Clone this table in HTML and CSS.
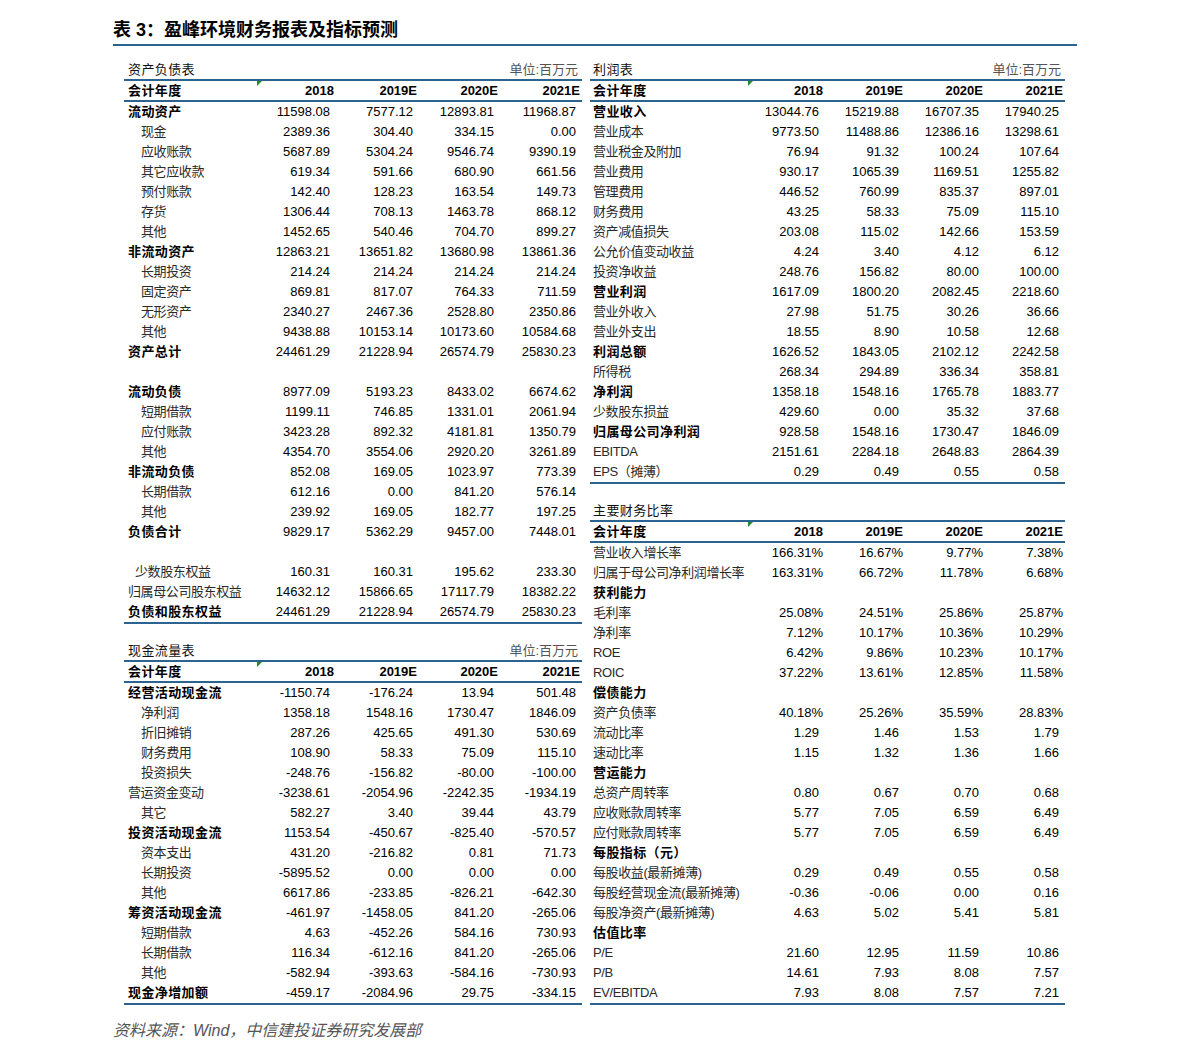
FILE: index.html
```html
<!DOCTYPE html>
<html lang="zh-CN">
<head>
<meta charset="utf-8">
<title>盈峰环境财务报表及指标预测</title>
<link rel="stylesheet" href="styles.css">
</head>
<body>
<div class="page">
  <div class="title">表 3：盈峰环境财务报表及指标预测</div>
  <div class="cols">
    <div class="col col-left">
      <table class="tbl tbl-left">
        <colgroup><col class="c-lab"><col class="c1"><col class="c2"><col class="c3"><col class="c4"></colgroup>
        <tr class="sec"><td class="lab">资产负债表</td><td colspan="4" class="unit">单位:百万元</td></tr>
        <tr class="hdr"><td class="lab b"><span class="mark"></span>会计年度</td><td>2018</td><td>2019E</td><td>2020E</td><td>2021E</td></tr>
        <tr><td class="lab b">流动资产</td><td class="n">11598.08</td><td class="n">7577.12</td><td class="n">12893.81</td><td class="n">11968.87</td></tr>
        <tr><td class="lab i1">现金</td><td class="n">2389.36</td><td class="n">304.40</td><td class="n">334.15</td><td class="n">0.00</td></tr>
        <tr><td class="lab i1">应收账款</td><td class="n">5687.89</td><td class="n">5304.24</td><td class="n">9546.74</td><td class="n">9390.19</td></tr>
        <tr><td class="lab i1">其它应收款</td><td class="n">619.34</td><td class="n">591.66</td><td class="n">680.90</td><td class="n">661.56</td></tr>
        <tr><td class="lab i1">预付账款</td><td class="n">142.40</td><td class="n">128.23</td><td class="n">163.54</td><td class="n">149.73</td></tr>
        <tr><td class="lab i1">存货</td><td class="n">1306.44</td><td class="n">708.13</td><td class="n">1463.78</td><td class="n">868.12</td></tr>
        <tr><td class="lab i1">其他</td><td class="n">1452.65</td><td class="n">540.46</td><td class="n">704.70</td><td class="n">899.27</td></tr>
        <tr><td class="lab b">非流动资产</td><td class="n">12863.21</td><td class="n">13651.82</td><td class="n">13680.98</td><td class="n">13861.36</td></tr>
        <tr><td class="lab i1">长期投资</td><td class="n">214.24</td><td class="n">214.24</td><td class="n">214.24</td><td class="n">214.24</td></tr>
        <tr><td class="lab i1">固定资产</td><td class="n">869.81</td><td class="n">817.07</td><td class="n">764.33</td><td class="n">711.59</td></tr>
        <tr><td class="lab i1">无形资产</td><td class="n">2340.27</td><td class="n">2467.36</td><td class="n">2528.80</td><td class="n">2350.86</td></tr>
        <tr><td class="lab i1">其他</td><td class="n">9438.88</td><td class="n">10153.14</td><td class="n">10173.60</td><td class="n">10584.68</td></tr>
        <tr><td class="lab b">资产总计</td><td class="n">24461.29</td><td class="n">21228.94</td><td class="n">26574.79</td><td class="n">25830.23</td></tr>
        <tr><td class="lab"></td><td></td><td></td><td></td><td></td></tr>
        <tr><td class="lab b">流动负债</td><td class="n">8977.09</td><td class="n">5193.23</td><td class="n">8433.02</td><td class="n">6674.62</td></tr>
        <tr><td class="lab i1">短期借款</td><td class="n">1199.11</td><td class="n">746.85</td><td class="n">1331.01</td><td class="n">2061.94</td></tr>
        <tr><td class="lab i1">应付账款</td><td class="n">3423.28</td><td class="n">892.32</td><td class="n">4181.81</td><td class="n">1350.79</td></tr>
        <tr><td class="lab i1">其他</td><td class="n">4354.70</td><td class="n">3554.06</td><td class="n">2920.20</td><td class="n">3261.89</td></tr>
        <tr><td class="lab b">非流动负债</td><td class="n">852.08</td><td class="n">169.05</td><td class="n">1023.97</td><td class="n">773.39</td></tr>
        <tr><td class="lab i1">长期借款</td><td class="n">612.16</td><td class="n">0.00</td><td class="n">841.20</td><td class="n">576.14</td></tr>
        <tr><td class="lab i1">其他</td><td class="n">239.92</td><td class="n">169.05</td><td class="n">182.77</td><td class="n">197.25</td></tr>
        <tr><td class="lab b">负债合计</td><td class="n">9829.17</td><td class="n">5362.29</td><td class="n">9457.00</td><td class="n">7448.01</td></tr>
        <tr><td class="lab"></td><td></td><td></td><td></td><td></td></tr>
        <tr><td class="lab i2">少数股东权益</td><td class="n">160.31</td><td class="n">160.31</td><td class="n">195.62</td><td class="n">233.30</td></tr>
        <tr><td class="lab">归属母公司股东权益</td><td class="n">14632.12</td><td class="n">15866.65</td><td class="n">17117.79</td><td class="n">18382.22</td></tr>
        <tr class="last"><td class="lab b">负债和股东权益</td><td class="n">24461.29</td><td class="n">21228.94</td><td class="n">26574.79</td><td class="n">25830.23</td></tr>
      </table>
      <div class="spacer"></div>
      <table class="tbl tbl-left">
        <colgroup><col class="c-lab"><col class="c1"><col class="c2"><col class="c3"><col class="c4"></colgroup>
        <tr class="sec"><td class="lab">现金流量表</td><td colspan="4" class="unit">单位:百万元</td></tr>
        <tr class="hdr"><td class="lab b"><span class="mark"></span>会计年度</td><td>2018</td><td>2019E</td><td>2020E</td><td>2021E</td></tr>
        <tr><td class="lab b">经营活动现金流</td><td class="n">-1150.74</td><td class="n">-176.24</td><td class="n">13.94</td><td class="n">501.48</td></tr>
        <tr><td class="lab i1">净利润</td><td class="n">1358.18</td><td class="n">1548.16</td><td class="n">1730.47</td><td class="n">1846.09</td></tr>
        <tr><td class="lab i1">折旧摊销</td><td class="n">287.26</td><td class="n">425.65</td><td class="n">491.30</td><td class="n">530.69</td></tr>
        <tr><td class="lab i1">财务费用</td><td class="n">108.90</td><td class="n">58.33</td><td class="n">75.09</td><td class="n">115.10</td></tr>
        <tr><td class="lab i1">投资损失</td><td class="n">-248.76</td><td class="n">-156.82</td><td class="n">-80.00</td><td class="n">-100.00</td></tr>
        <tr><td class="lab">营运资金变动</td><td class="n">-3238.61</td><td class="n">-2054.96</td><td class="n">-2242.35</td><td class="n">-1934.19</td></tr>
        <tr><td class="lab i1">其它</td><td class="n">582.27</td><td class="n">3.40</td><td class="n">39.44</td><td class="n">43.79</td></tr>
        <tr><td class="lab b">投资活动现金流</td><td class="n">1153.54</td><td class="n">-450.67</td><td class="n">-825.40</td><td class="n">-570.57</td></tr>
        <tr><td class="lab i1">资本支出</td><td class="n">431.20</td><td class="n">-216.82</td><td class="n">0.81</td><td class="n">71.73</td></tr>
        <tr><td class="lab i1">长期投资</td><td class="n">-5895.52</td><td class="n">0.00</td><td class="n">0.00</td><td class="n">0.00</td></tr>
        <tr><td class="lab i1">其他</td><td class="n">6617.86</td><td class="n">-233.85</td><td class="n">-826.21</td><td class="n">-642.30</td></tr>
        <tr><td class="lab b">筹资活动现金流</td><td class="n">-461.97</td><td class="n">-1458.05</td><td class="n">841.20</td><td class="n">-265.06</td></tr>
        <tr><td class="lab i1">短期借款</td><td class="n">4.63</td><td class="n">-452.26</td><td class="n">584.16</td><td class="n">730.93</td></tr>
        <tr><td class="lab i1">长期借款</td><td class="n">116.34</td><td class="n">-612.16</td><td class="n">841.20</td><td class="n">-265.06</td></tr>
        <tr><td class="lab i1">其他</td><td class="n">-582.94</td><td class="n">-393.63</td><td class="n">-584.16</td><td class="n">-730.93</td></tr>
        <tr class="last"><td class="lab b">现金净增加额</td><td class="n">-459.17</td><td class="n">-2084.96</td><td class="n">29.75</td><td class="n">-334.15</td></tr>
      </table>
    </div>
    <div class="col col-right">
      <table class="tbl tbl-right">
        <colgroup><col class="c-lab"><col class="c1"><col class="c2"><col class="c3"><col class="c4"></colgroup>
        <tr class="sec"><td class="lab">利润表</td><td colspan="4" class="unit">单位:百万元</td></tr>
        <tr class="hdr"><td class="lab b"><span class="mark"></span>会计年度</td><td>2018</td><td>2019E</td><td>2020E</td><td>2021E</td></tr>
        <tr><td class="lab b">营业收入</td><td class="n">13044.76</td><td class="n">15219.88</td><td class="n">16707.35</td><td class="n">17940.25</td></tr>
        <tr><td class="lab">营业成本</td><td class="n">9773.50</td><td class="n">11488.86</td><td class="n">12386.16</td><td class="n">13298.61</td></tr>
        <tr><td class="lab">营业税金及附加</td><td class="n">76.94</td><td class="n">91.32</td><td class="n">100.24</td><td class="n">107.64</td></tr>
        <tr><td class="lab">营业费用</td><td class="n">930.17</td><td class="n">1065.39</td><td class="n">1169.51</td><td class="n">1255.82</td></tr>
        <tr><td class="lab">管理费用</td><td class="n">446.52</td><td class="n">760.99</td><td class="n">835.37</td><td class="n">897.01</td></tr>
        <tr><td class="lab">财务费用</td><td class="n">43.25</td><td class="n">58.33</td><td class="n">75.09</td><td class="n">115.10</td></tr>
        <tr><td class="lab">资产减值损失</td><td class="n">203.08</td><td class="n">115.02</td><td class="n">142.66</td><td class="n">153.59</td></tr>
        <tr><td class="lab">公允价值变动收益</td><td class="n">4.24</td><td class="n">3.40</td><td class="n">4.12</td><td class="n">6.12</td></tr>
        <tr><td class="lab">投资净收益</td><td class="n">248.76</td><td class="n">156.82</td><td class="n">80.00</td><td class="n">100.00</td></tr>
        <tr><td class="lab b">营业利润</td><td class="n">1617.09</td><td class="n">1800.20</td><td class="n">2082.45</td><td class="n">2218.60</td></tr>
        <tr><td class="lab">营业外收入</td><td class="n">27.98</td><td class="n">51.75</td><td class="n">30.26</td><td class="n">36.66</td></tr>
        <tr><td class="lab">营业外支出</td><td class="n">18.55</td><td class="n">8.90</td><td class="n">10.58</td><td class="n">12.68</td></tr>
        <tr><td class="lab b">利润总额</td><td class="n">1626.52</td><td class="n">1843.05</td><td class="n">2102.12</td><td class="n">2242.58</td></tr>
        <tr><td class="lab">所得税</td><td class="n">268.34</td><td class="n">294.89</td><td class="n">336.34</td><td class="n">358.81</td></tr>
        <tr><td class="lab b">净利润</td><td class="n">1358.18</td><td class="n">1548.16</td><td class="n">1765.78</td><td class="n">1883.77</td></tr>
        <tr><td class="lab">少数股东损益</td><td class="n">429.60</td><td class="n">0.00</td><td class="n">35.32</td><td class="n">37.68</td></tr>
        <tr><td class="lab b">归属母公司净利润</td><td class="n">928.58</td><td class="n">1548.16</td><td class="n">1730.47</td><td class="n">1846.09</td></tr>
        <tr><td class="lab">EBITDA</td><td class="n">2151.61</td><td class="n">2284.18</td><td class="n">2648.83</td><td class="n">2864.39</td></tr>
        <tr class="last"><td class="lab">EPS（摊薄）</td><td class="n">0.29</td><td class="n">0.49</td><td class="n">0.55</td><td class="n">0.58</td></tr>
      </table>
      <div class="spacer"></div>
      <table class="tbl tbl-right">
        <colgroup><col class="c-lab"><col class="c1"><col class="c2"><col class="c3"><col class="c4"></colgroup>
        <tr class="sec"><td class="lab">主要财务比率</td><td colspan="4" class="unit"></td></tr>
        <tr class="hdr"><td class="lab b"><span class="mark"></span>会计年度</td><td>2018</td><td>2019E</td><td>2020E</td><td>2021E</td></tr>
        <tr><td class="lab">营业收入增长率</td><td>166.31%</td><td>16.67%</td><td>9.77%</td><td>7.38%</td></tr>
        <tr><td class="lab">归属于母公司净利润增长率</td><td>163.31%</td><td>66.72%</td><td>11.78%</td><td>6.68%</td></tr>
        <tr><td class="lab b">获利能力</td><td></td><td></td><td></td><td></td></tr>
        <tr><td class="lab">毛利率</td><td>25.08%</td><td>24.51%</td><td>25.86%</td><td>25.87%</td></tr>
        <tr><td class="lab">净利率</td><td>7.12%</td><td>10.17%</td><td>10.36%</td><td>10.29%</td></tr>
        <tr><td class="lab">ROE</td><td>6.42%</td><td>9.86%</td><td>10.23%</td><td>10.17%</td></tr>
        <tr><td class="lab">ROIC</td><td>37.22%</td><td>13.61%</td><td>12.85%</td><td>11.58%</td></tr>
        <tr><td class="lab b">偿债能力</td><td></td><td></td><td></td><td></td></tr>
        <tr><td class="lab">资产负债率</td><td>40.18%</td><td>25.26%</td><td>35.59%</td><td>28.83%</td></tr>
        <tr><td class="lab">流动比率</td><td class="n">1.29</td><td class="n">1.46</td><td class="n">1.53</td><td class="n">1.79</td></tr>
        <tr><td class="lab">速动比率</td><td class="n">1.15</td><td class="n">1.32</td><td class="n">1.36</td><td class="n">1.66</td></tr>
        <tr><td class="lab b">营运能力</td><td></td><td></td><td></td><td></td></tr>
        <tr><td class="lab">总资产周转率</td><td class="n">0.80</td><td class="n">0.67</td><td class="n">0.70</td><td class="n">0.68</td></tr>
        <tr><td class="lab">应收账款周转率</td><td class="n">5.77</td><td class="n">7.05</td><td class="n">6.59</td><td class="n">6.49</td></tr>
        <tr><td class="lab">应付账款周转率</td><td class="n">5.77</td><td class="n">7.05</td><td class="n">6.59</td><td class="n">6.49</td></tr>
        <tr><td class="lab b">每股指标（元）</td><td></td><td></td><td></td><td></td></tr>
        <tr><td class="lab">每股收益(最新摊薄)</td><td class="n">0.29</td><td class="n">0.49</td><td class="n">0.55</td><td class="n">0.58</td></tr>
        <tr><td class="lab">每股经营现金流(最新摊薄)</td><td class="n">-0.36</td><td class="n">-0.06</td><td class="n">0.00</td><td class="n">0.16</td></tr>
        <tr><td class="lab">每股净资产(最新摊薄)</td><td class="n">4.63</td><td class="n">5.02</td><td class="n">5.41</td><td class="n">5.81</td></tr>
        <tr><td class="lab b">估值比率</td><td></td><td></td><td></td><td></td></tr>
        <tr><td class="lab">P/E</td><td class="n">21.60</td><td class="n">12.95</td><td class="n">11.59</td><td class="n">10.86</td></tr>
        <tr><td class="lab">P/B</td><td class="n">14.61</td><td class="n">7.93</td><td class="n">8.08</td><td class="n">7.57</td></tr>
        <tr class="last"><td class="lab">EV/EBITDA</td><td class="n">7.93</td><td class="n">8.08</td><td class="n">7.57</td><td class="n">7.21</td></tr>
      </table>
    </div>
  </div>
  <div class="source">资料来源：Wind，中信建投证券研究发展部</div>
</div>
</body>
</html>
```

FILE: styles.css
```css
html, body {
  margin: 0;
  padding: 0;
  background: #ffffff;
}

body {
  font-family: "Liberation Sans", "Noto Sans CJK SC", sans-serif;
  color: #000000;
}

.page {
  margin-left: 113px;
  width: 964px;
}

.title {
  padding-top: 18px;
  padding-bottom: 2px;
  height: 24px;
  line-height: 24px;
  font-size: 18px;
  font-weight: 700;
  font-family: "Liberation Sans", "Noto Sans CJK SC", sans-serif;
  border-bottom: 2px solid #2b6391;
  margin-bottom: 15px;
}

.cols {
  display: flex;
  gap: 8px;
  padding-left: 11px;
}

.col-left { width: 458px; }
.col-right { width: 475px; }

.spacer { height: 18px; }

.tbl {
  border-collapse: separate;
  border-spacing: 0;
  table-layout: fixed;
  width: 100%;
}

.tbl-left .c-lab { width: 138px; }
.tbl-left .c1 { width: 74px; }
.tbl-left .c2 { width: 83px; }
.tbl-left .c3 { width: 81px; }
.tbl-left .c4 { width: 82px; }

.tbl-right .c-lab { width: 163px; }
.tbl-right .c1 { width: 72px; }
.tbl-right .c2 { width: 80px; }
.tbl-right .c3 { width: 80px; }
.tbl-right .c4 { width: 80px; }

.tbl td {
  height: 20px;
  line-height: 20px;
  padding: 0 2px 0 0;
  font-size: 13px;
  text-align: right;
  white-space: nowrap;
  overflow: visible;
  vertical-align: middle;
}

.tbl td.n { padding-right: 6px; }

.tbl td.lab {
  text-align: left;
  padding-left: 4px;
  color: #2a2a2a;
  letter-spacing: -0.4px;
  position: relative;
}

.tbl-right td.lab { padding-left: 3px; }

.tbl td.lab.b {
  color: #000000;
  font-weight: 700;
  letter-spacing: 0.4px;
}

.tbl td.lab.i1 { padding-left: 17px; }
.tbl td.lab.i2 { padding-left: 11px; }

.tbl tr.sec td {
  height: 18px;
  line-height: 18px;
  border-bottom: 2px solid #2b6391;
}

.tbl tr.sec td.lab {
  color: #111111;
  letter-spacing: 0.4px;
}

.tbl tr.sec td.unit {
  color: #555555;
  padding-right: 4px;
  letter-spacing: 0;
}

.tbl tr.hdr td {
  height: 19px;
  line-height: 19px;
  border-bottom: 2px solid #2b6391;
  font-weight: 700;
}

.tbl tr.last td {
  height: 20px;
  line-height: 20px;
  border-bottom: 2px solid #2b6391;
}

.mark {
  position: absolute;
  top: 0;
  right: 0;
  width: 0;
  height: 0;
  border-top: 5px solid #2a8a2a;
  border-right: 5px solid transparent;
}

.source {
  margin-top: 16px;
  line-height: 20px;
  font-size: 16px;
  font-style: italic;
  color: #555555;
  font-family: "Liberation Sans", "Noto Sans CJK SC", sans-serif;
}
```
